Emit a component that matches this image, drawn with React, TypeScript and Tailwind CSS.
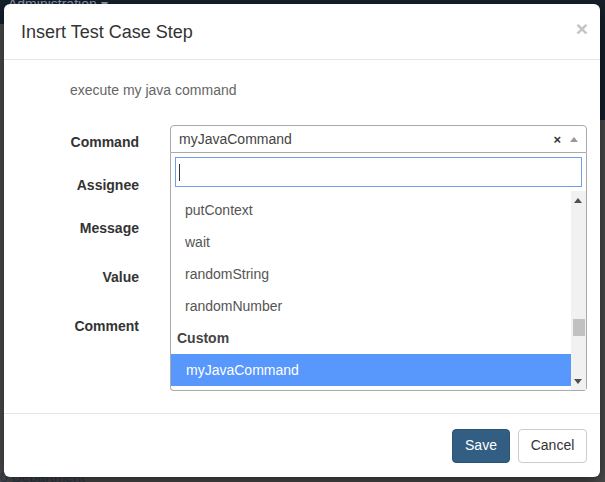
import React from "react";

const options = ["putContext", "wait", "randomString", "randomNumber"];

function Caret({ up, className }: { up?: boolean; className?: string }) {
  return (
    <svg width="8" height="5" viewBox="0 0 8 5" className={className}>
      {up ? <path d="M0 5 L4 0 L8 5 Z" fill="currentColor" /> : <path d="M0 0 L4 5 L8 0 Z" fill="currentColor" />}
    </svg>
  );
}

export default function App() {
  return (
    <div className="relative w-[605px] h-[482px] overflow-hidden bg-[#4b4b4b] font-['Liberation_Sans',Arial,sans-serif]">
      {/* page behind the backdrop */}
      <div className="h-[24px] bg-[#15202c] px-2 text-[14px] leading-[8px] text-[#8a9bb0]">Administration ▾</div>
      <div className="absolute right-0 top-0 h-[120px] w-[10px] bg-[#15202c]" />
      <div className="absolute bottom-0 left-0 text-[14px] leading-[10px] text-[#2d3b4f]">0 Department</div>

      {/* modal */}
      <div className="absolute left-[4px] top-[4px] flex h-[473px] w-[596px] flex-col rounded-[6px] bg-white text-[14px] text-[#333] shadow-[0_5px_15px_rgba(0,0,0,0.5)]">
        <div className="flex h-[56px] items-start justify-between border-b border-[#e5e5e5] px-[17px] pt-[15px]">
          <h4 className="text-[18px] leading-[26px] text-[#333]">Insert Test Case Step</h4>
          <span className="mr-[-5px] mt-[-3px] text-[21px] font-bold leading-[26px] text-[#c4c4c4]">×</span>
        </div>

        <div className="relative flex-1 border-b border-[#e5e5e5]">
          <p className="pl-[66px] pt-[20px] text-[14px] leading-[20px] text-[#666]">execute my java command</p>

          <div className="mt-[25px] flex">
            <div className="flex w-[135px] flex-col items-end font-bold text-[#333]">
              <div className="h-[43px] pt-[7px] leading-[20px]">Command</div>
              <div className="h-[43px] pt-[7px] leading-[20px]">Assignee</div>
              <div className="h-[49px] pt-[7px] leading-[20px]">Message</div>
              <div className="h-[49px] pt-[7px] leading-[20px]">Value</div>
              <div className="h-[49px] pt-[7px] leading-[20px]">Comment</div>
            </div>

            <div className="relative ml-[31px] w-[417px]">
              <div className="flex h-[28px] items-center rounded-t-[4px] border border-[#aaa] bg-white pl-[8px] pr-[8px]">
                <span className="flex-1 text-[#444]">myJavaCommand</span>
                <span className="mr-[9px] text-[13px] font-bold leading-none text-[#333]">×</span>
                <Caret up className="text-[#999]" />
              </div>

              {/* open dropdown */}
              <div className="absolute left-0 top-[28px] z-10 w-[417px] rounded-b-[4px] border border-t-0 border-[#aaa] bg-white">
                <div className="p-[4px]">
                  <div className="flex h-[30px] items-center border border-[#6f9fea] px-[3px]">
                    <span className="h-[17px] w-px bg-[#333]" />
                  </div>
                </div>
                <div className="flex h-[199px] overflow-hidden">
                  <div className="flex-1 pt-[3px]">
                    {options.map((o) => (
                      <div key={o} className="flex h-[32px] items-center pl-[14px] text-[#555]">
                        {o}
                      </div>
                    ))}
                    <div className="flex h-[32px] items-center pl-[6px] font-bold text-[#444]">Custom</div>
                    <div className="flex h-[32px] items-center bg-[#5897fb] pl-[15px] text-white">myJavaCommand</div>
                  </div>
                  <div className="relative w-[15px] bg-[#f1f1f1]">
                    <Caret up className="absolute left-[3px] top-[7px] text-[#505050]" />
                    <div className="absolute left-[2px] top-[128px] h-[17px] w-[12px] bg-[#c1c1c1]" />
                    <Caret className="absolute bottom-[6px] left-[3px] text-[#505050]" />
                  </div>
                </div>
              </div>
            </div>
          </div>
        </div>

        <div className="flex h-[63px] items-center justify-end gap-[8px] px-[13px]">
          <button className="h-[34px] w-[58px] rounded-[4px] border border-[#2c5374] bg-[#335e83] text-[14px] text-white">
            Save
          </button>
          <button className="h-[34px] w-[69px] rounded-[4px] border border-[#ccc] bg-white text-[14px] text-[#333]">
            Cancel
          </button>
        </div>
      </div>
    </div>
  );
}
